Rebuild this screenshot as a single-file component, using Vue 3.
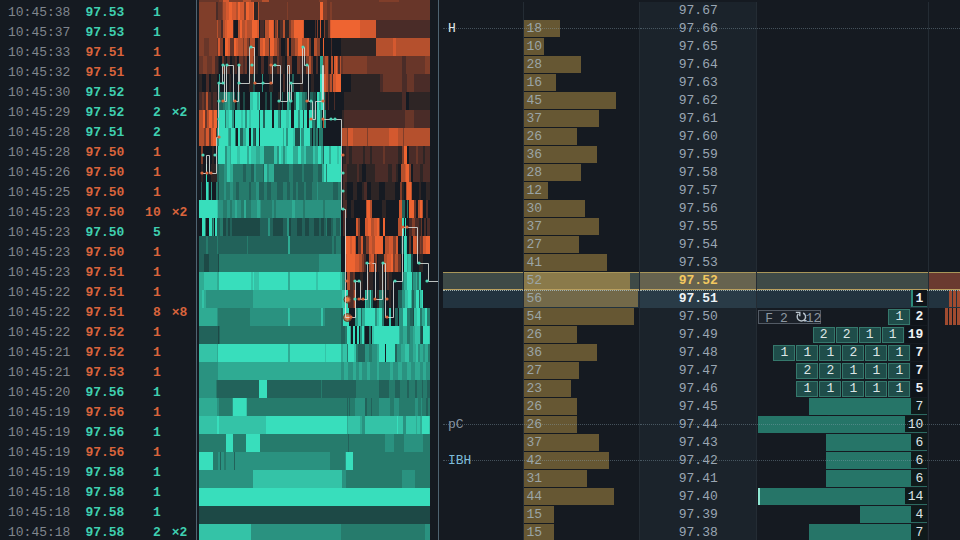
<template>
  <main class="desk">
    <section class="tape" aria-label="Time and sales">
      <table class="tape-table">
        <tbody>
          <tr v-for="(t, i) in trades" :key="i" :class="t.side">
            <td class="time">{{ t.time }}</td>
            <td class="price">{{ t.price }}</td>
            <td class="qty">{{ t.qty }}</td>
            <td class="mult">{{ t.mult }}</td>
          </tr>
        </tbody>
      </table>
    </section>

    <section class="heat" aria-label="Liquidity heatmap">
      <svg class="heat-chart" viewBox="0 0 239 540" preserveAspectRatio="none">
        <g shape-rendering="crispEdges">
          <rect
            v-for="(c, i) in cells"
            :key="i"
            :x="c.x"
            :y="c.y"
            :width="c.w"
            :height="c.h"
            :fill="c.fill"
          />
        </g>
        <g v-for="(d, i) in bigPrints" :key="'b' + i">
          <circle :cx="d[0]" :cy="d[1]" :r="d[2]" fill="#c96a3c" fill-opacity="0.75" stroke="#5d3a2a" />
          <circle :cx="d[0]" :cy="d[1]" r="2" fill="#f07a45" />
        </g>
        <path :d="pricePath" fill="none" stroke="#d9dfdc" stroke-width="1" stroke-opacity="0.85" />
        <circle v-for="(d, i) in buys" :key="'u' + i" :cx="d[0]" :cy="d[1]" r="1.6" fill="#4fd6b8" />
        <circle v-for="(d, i) in sells" :key="'s' + i" :cx="d[0]" :cy="d[1]" r="1.6" fill="#d9663c" />
      </svg>
    </section>

    <section class="ladder" aria-label="Price ladder">
      <table class="ladder-table">
        <colgroup>
          <col class="col-label">
          <col class="col-vol">
          <col class="col-price">
          <col class="col-bid">
          <col class="col-ask">
        </colgroup>
        <tbody>
          <tr v-for="r in levels" :key="r.price" :class="[r.mark, { marked: r.label }]">
            <td class="label" :class="r.label && r.label.toLowerCase()">{{ r.label }}</td>
            <td class="vol">
              <div v-if="r.vol" class="vol-bar" :style="{ width: r.vol * 1.767 + '%' }">{{ r.vol }}</div>
            </td>
            <td class="price">{{ r.price }}</td>
            <td class="bid">
              <div class="bid-line">
                <div v-if="r.tag" class="tag">
                  <span>F</span>
                  <span>2</span>
                  <svg class="reload" viewBox="0 0 12 12">
                    <path d="M8.2 2A4.2 4.2 0 1 1 3.4 2.8" />
                    <path d="M0.8 1.4H4.8V5.2M9 9.8H11.6" />
                  </svg>
                  <span>12</span>
                </div>
                <div v-if="r.bar" class="bid-bar" :class="{ capped: r.bar > 10 }" :style="{ width: Math.min(100, r.bar * 10) + '%' }"></div>
                <span v-for="(o, i) in r.orders" :key="i" class="order">{{ o }}</span>
                <b v-if="r.total" class="total" :class="{ resting: r.bar, best: r.mark === 'last' }">{{ r.total }}</b>
              </div>
            </td>
            <td class="ask">
              <div class="ask-line">
                <i v-for="n in r.asks" :key="n"></i>
              </div>
            </td>
          </tr>
        </tbody>
      </table>
    </section>
  </main>
</template>

<script setup>
const tape = `10:45:38 97.53 1 b
10:45:37 97.53 1 b
10:45:33 97.51 1 s
10:45:32 97.51 1 s
10:45:30 97.52 1 b
10:45:29 97.52 2 b ×2
10:45:28 97.51 2 b
10:45:28 97.50 1 s
10:45:26 97.50 1 s
10:45:25 97.50 1 s
10:45:23 97.50 10 s ×2
10:45:23 97.50 5 b
10:45:23 97.50 1 s
10:45:23 97.51 1 s
10:45:22 97.51 1 s
10:45:22 97.51 8 s ×8
10:45:22 97.52 1 s
10:45:21 97.52 1 s
10:45:21 97.53 1 s
10:45:20 97.56 1 b
10:45:19 97.56 1 s
10:45:19 97.56 1 b
10:45:19 97.56 1 s
10:45:19 97.58 1 b
10:45:18 97.58 1 b
10:45:18 97.58 1 b
10:45:18 97.58 2 b ×2`

const trades = tape.split('\n').map((row) => {
  const [time, price, qty, side, mult] = row.split(' ')
  return { time, price, qty, side: side === 'b' ? 'buy' : 'sell', mult }
})

// heat palette: a-g resting bids, m-s resting offers, z empty
const palette = {
  a: '#1d4946',
  b: '#22625a',
  c: '#267b6c',
  d: '#2a9280',
  e: '#2fab93',
  f: '#34c3a7',
  g: '#38debc',
  m: '#2e2525',
  n: '#4a2c28',
  o: '#683629',
  p: '#803e2a',
  q: '#b5502d',
  r: '#d4592f',
  s: '#ee6431',
  z: '#151a22'
}

// one string per price row, each token is start x + level
const heatRows = [
  '0o 20p 24r 30p 44q 52p 63q 70o 120p 128o 180p 200o',
  '0p 17n 19o 23p 24q 27r 30s 33r 37q 39s 41r 45p 47s 50r 54s 55m 59q 60o 88p 89o 121s 124p 128o 131p 133o',
  '0p 18q 19p 22n 24q 26r 28s 34n 35z 39q 41s 43q 46r 48q 53s 58r 60z 61n 65m 66q 70s 74r 75m 76p 78q 79m 81n 84q 86m 90p 92q 95s 104r 105z 116n 117z 118p 119z 121r 122z 125p 126m 129o 131r 132s 161r 177n',
  '0p 5o 10p 18o 19r 21p 24z 26s 29r 31o 35s 37r 39q 44p 45q 48p 50n 51q 56z 59n 61r 64s 66q 70n 71s 75q 78p 80n 82z 86m 88q 90z 92p 96q 99s 103q 108r 110o 112z 115q 118p 121z 124s 125z 132n 133z 142m 177q 194r 197q',
  '0o 4p 8o 13p 16n 19m 20z 23o 25m 27z 28n 31z 33m 36n 38z 40o 44n 46o 48z 51q 54p 56m 59z 62n 65z 69n 71p 74m 78o 80n 83m 86z 88p 91o 93z 98o 101n 104m 107p 110q 112o 114z 117n 119z 121e 124p 126q 129n 130z 132q 134z 135r 137s 138q 139n 141q 142o 144p 168o 203n 207o 226p',
  '0m 3z 7n 10z 12m 18z 20d 21z 30m 32z 40n 41z 50m 54a 56z 63d 64z 70m 74z 84n 86z 93b 95z 101m 104z 112m 115z 121g 124f 125r 127q 129o 131q 133n 134r 137s 142z 152m 181n 184o 203n 207n 208o 215n',
  '0n 3o 5n 7q 9n 12m 14n 18z 20c 21b 24c 26d 29e 31c 33b 36z 38b 41z 44a 46z 51f 54g 58e 60g 61z 66a 68z 71b 73z 79m 81z 83b 84z 88e 90c 92z 95b 97g 100e 103c 106b 108z 111b 114a 117z 118g 120e 122g 124c 126n 127z 129n 130z 135n 136z 145m 203n 207z 210m',
  '0q 4s 6o 8q 10s 13q 15s 18a 20g 26c 27f 30g 33d 35z 36g 42f 44g 46d 48g 50f 52g 60a 61g 64b 66g 73z 75g 79d 81b 82g 87f 90g 92z 95g 99d 101g 104a 105g 108z 110g 113c 116a 118g 121d 123z 124q 125d 127z 143m 145n 206o 215n',
  '0q 5p 7r 10o 12r 14s 17n 18d 20g 29e 30d 32g 36c 37z 39g 41b 44e 47g 50z 52g 54b 56a 57g 60z 61g 84e 85g 87d 89g 94f 96a 101g 102d 105g 111b 113z 114c 116a 117c 119z 120c 124z 143q 148p 149r 154q 168p 169q 190r 199q 204p 205q',
  '0z 2p 4z 13m 15z 18a 19g 26d 28f 31e 32g 38f 41g 48e 50g 52f 57e 61f 65c 75f 78d 80g 82f 84d 86f 88g 94e 99g 102e 105f 107d 114f 116e 119g 122e 124b 125g 130e 132g 138f 140g 142z 144m 147n 150m 153n 164m 166n 171m 173n 184o 186n 199m 203p 205s 208z 210n 217o 219n 224m 226n',
  '0z 2m 4z 7g 8z 12m 18b 20c 25d 28f 31e 34c 44b 47c 52b 55d 57c 64b 65f 68d 70e 75b 90c 94b 103c 105b 114c 119b 123e 125g 127c 128g 142z 144n 148m 158n 160m 163z 167m 176n 189m 193n 197m 199z 202q 206r 207s 210p 212z 214n 221m 224n',
  '0z 2b 3z 7g 9d 10z 12d 13z 17c 19a 20c 25d 27c 31d 34c 37b 40c 50b 52c 57d 60b 65c 68b 72c 78b 84c 88b 91c 94b 97c 99b 105c 107b 113c 118d 119c 134b 139c 142z 144n 146m 148z 154m 158z 163m 165n 168z 172m 180z 186m 196z 201p 203m 205z 207q 208s 212q 213z 220m 222z 227m',
  '0g 18f 19d 24c 28d 31c 33d 36e 38d 42c 45e 47c 52d 58e 61d 62c 73d 75c 77d 93e 96d 104c 106d 116d 124c 126d 142z 144n 148z 152m 155z 167q 168s 171q 173z 183m 187z 200r 203b 206z 208c 209z 210s 215o 217z 219q 221s 223q 224z 227n 229z',
  '0z 3g 6c 7z 10g 13b 14d 15z 16g 18b 21c 24a 27b 29a 31b 33a 61b 69d 71b 74a 84b 88d 90a 92b 98a 103b 106a 110b 115a 120b 122a 125b 127c 128a 132b 134c 137b 141d 142z 144n 146z 157r 159p 161z 166r 169s 172q 175r 178s 180p 181z 184s 186z 199q 203g 205z 206g 207z 210n 213p 216n 220m 222o 223z 225n 227z 228n',
  '0b 7c 9b 18c 19b 48c 49b 89e 91b 116b 133c 135b 137c 142z 146s 151r 153s 156q 157z 159o 162r 164m 167p 170r 173q 176s 184z 186q 190r 194p 197r 199z 202a 205g 207f 208z 210o 212z 214r 217q 219n 221p 222o 224r 227s',
  '0b 5a 10b 19a 20c 120d 142z 146r 148s 156r 160q 163p 165n 167z 170q 172r 175n 176p 178z 179m 185q 188r 192s 194p 196q 199o 202z 205g 208e 209f 212a 214z 220m 224z',
  '0e 5f 18e 20g 52f 54g 55f 60g 89e 91g 117f 119g 141f 143d 145c 146z 148q 151n 154o 156z 161m 164z 168n 170m 174z 180m 185z 188n 190m 193z 203c 205e 208g 213b 214d 217e 218c 220f 222z',
  '0e 3f 5e 7d 54e 143f 146g 149n 154o 155q 157z 166f 167d 170c 171g 172b 174z 178m 180c 183b 185z 190m 192z 199b 203d 206f 209g 212e 213b 215d 217g 220b 221f 223g 224z',
  '0e 18d 19c 51d 89f 91d 122f 124d 126c 142b 144g 150z 156d 159f 162b 163e 166g 176d 178f 180g 183c 185z 190f 192z 196b 199z 200d 204g 208c 211b 214a 215f 218g 221c 223e 226g 228c',
  '0b 19a 20b 21c 142b 146c 148g 151e 152z 154g 156z 158g 160z 161d 163g 165b 166z 170c 172z 173f 175g 200e 201d 204e 208c 211d 214e 216f 221b 222a 224g 230f',
  '0f 18e 19g 89e 91g 126f 127g 142e 144f 148c 149g 155f 157c 159b 166d 170c 173d 178e 180g 184g 186z 187g 196b 198d 202e 206f 210d 214e 217f 219d 221e 224d 226e 229c',
  '0d 19e 142d 145e 149d 154e 157d 160e 163d 168e 171d 178e 180d 191e 194d 199e 203d 208e 212d 216e 221d 224e 227d',
  '0d 17c 18b 60g 68b 122c 123b 157c 180b 190c 196b 201c 208b 210c 216b 218c 223b 224c 228b',
  '0e 18d 20c 33d 34g 47f 48c 148b 149c 150b 151c 156d 166b 168c 172b 173c 180d 191c 195d 200c 216d 219c 222d 223c 227b 229c',
  '0f 18g 20f 67g 148e 149f 161e 163d 166f 198g 199f 204d 207f 217e 218f 221e 223g 230f',
  '0c 27g 34c 47g 61c 149b 150c 186d 195c 205d 224c',
  '0g 14c 19d 21b 22d 25c 27d 35b 36d 131c 146d 147g 154c',
  '0d 54f 143d 147c 203d 216c',
  '0g',
  '0a',
  '0f 52d 142c 226d'
]

const chartWidth = 231

const cells = heatRows.flatMap((row, i) => {
  const y = i === 0 ? 0 : 18 * i - 16
  const h = i === 0 ? 2 : 18
  const runs = row.split(' ').map((t) => [parseInt(t), t.slice(-1)])
  return runs.map(([x, level], n) => ({
    x,
    y,
    w: (n + 1 < runs.length ? runs[n + 1][0] : chartWidth) - x,
    h,
    fill: palette[level]
  }))
})

const pricePath =
  'M2 173.5H7.5V155.5H10.5V173.5H17.5V137.5H19.5V83.5H23.5V65.5H25.5V101.5H27.5V65.5H34.5V101.5H39.5V65.5H40.5V83.5' +
  'H50.5V47.5H55.5V83.5H73.5V65.5H81.5V101.5H88.5V65.5H90.5V101.5H92.5V83.5H103.5V47.5H105.5V65.5H109.5V101.5' +
  'H113.5V119.5H116.5V101.5H123.5V65.5H124.5V119.5H142.5V209.5H146.5V317.5H156.5V281.5H161.5V299.5H168.5V263.5' +
  'H176.5V299.5H183.5V263.5H186.5V317.5H194.5V281.5H203.5V227.5H218.5V263.5H229.5V281.5H239'

const bigPrints = [[148.5, 299.5, 3.5], [148.5, 317.5, 4]]

const buys = [
  [4, 155], [16, 155], [20, 83], [24, 83], [24, 65], [28, 65], [20, 101], [20, 119], [40, 65], [40, 83],
  [52, 47], [53, 65], [64, 83], [76, 65], [80, 101], [92, 101], [92, 83], [104, 47], [108, 65], [112, 101],
  [132, 119], [136, 119], [144, 173], [144, 191], [144, 209], [156, 281], [160, 281], [168, 263], [184, 263],
  [156, 299], [196, 281], [220, 263], [228, 281]
]

const sells = [
  [3, 173], [8, 173], [12, 173], [20, 137], [24, 101], [36, 101], [56, 83], [72, 65], [72, 83], [108, 101],
  [124, 101], [112, 119], [124, 119], [144, 155], [148, 281], [160, 299], [164, 299], [172, 263], [176, 299],
  [188, 299], [188, 317], [152, 317], [204, 227], [208, 227]
]

const volumes = [
  0, 18, 10, 28, 16, 45, 37, 26, 36, 28, 12, 30, 37, 27, 41, 52, 56, 54, 26, 36, 27, 23, 26, 26, 37, 42, 31, 44, 15, 15
]

const extras = {
  '97.66': { label: 'H' },
  '97.52': { mark: 'cursor' },
  '97.51': { mark: 'last', total: 1, asks: 3 },
  '97.50': { tag: true, orders: [1], total: 2, asks: 4 },
  '97.49': { orders: [2, 2, 1, 1], total: 19 },
  '97.48': { orders: [1, 1, 1, 2, 1, 1], total: 7 },
  '97.47': { orders: [2, 2, 1, 1, 1], total: 7 },
  '97.46': { orders: [1, 1, 1, 1, 1], total: 5 },
  '97.45': { bar: 7, total: 7 },
  '97.44': { label: 'pC', bar: 10, total: 10 },
  '97.43': { bar: 6, total: 6 },
  '97.42': { label: 'IBH', bar: 6, total: 6 },
  '97.41': { bar: 6, total: 6 },
  '97.40': { bar: 14, total: 14 },
  '97.39': { bar: 4, total: 4 },
  '97.38': { bar: 7, total: 7 }
}

const levels = volumes.map((vol, i) => {
  const price = ((9767 - i) / 100).toFixed(2)
  return { price, vol, ...extras[price] }
})
</script>

<style>
body {
  background: #151a21;
}
</style>

<style scoped>
.desk {
  display: grid;
  grid-template-columns: 197fr 242fr 521fr;
  height: 100vh;
  overflow: hidden;
  background: #151a21;
  color: #9aa5b1;
  font-family: 'Liberation Mono', monospace;
  font-size: 13px;
}

table {
  width: 100%;
  border-collapse: collapse;
  table-layout: fixed;
}

td {
  padding: 0;
}

/* time and sales */
.tape {
  padding-top: 3px;
  border-right: 1px solid #4f6371;
}

.tape-table tr {
  height: 20px;
  line-height: 20px;
}

.tape-table td {
  white-space: nowrap;
}

.tape-table .time {
  width: 40%;
  padding-left: 8px;
  box-sizing: border-box;
}

.tape-table .price {
  width: 24%;
  padding-left: 7px;
  box-sizing: border-box;
}

.tape-table .qty {
  width: 18%;
  text-align: right;
}

.tape-table .mult {
  padding-left: 11px;
}

.buy td {
  color: #3fd0b1;
  font-weight: bold;
}

.sell td {
  color: #d9643c;
  font-weight: bold;
}

.tape-table tr .time {
  color: #80868e;
  font-weight: normal;
}

/* heatmap */
.heat {
  padding-left: 2px;
  border-right: 1px solid #4f6371;
}

.heat-chart {
  display: block;
  width: 100%;
  height: 540px;
}

/* ladder */
.ladder {
  padding: 2px 0 0 4px;
  background: #151a21;
}

.col-label {
  width: 80px;
}

.col-vol {
  width: 22.6%;
}

.col-price {
  width: 22.6%;
}

.col-bid {
  width: 33.3%;
}

.ladder-table tr {
  height: 18px;
  line-height: 17px;
}

.ladder-table td {
  position: relative;
  height: 18px;
  vertical-align: top;
  white-space: nowrap;
  border-right: 1px solid #242c34;
}

.ladder-table td.ask {
  border-right: 0;
}

.ladder-table .label {
  padding-left: 5px;
  box-sizing: border-box;
  color: #8794a2;
}

.ladder-table .h {
  color: #e4e8eb;
}

.ladder-table .ibh {
  color: #7cbbd9;
}

.vol-bar {
  height: 17px;
  padding-left: 3px;
  box-sizing: border-box;
  background: #665733;
  color: #9ba5a6;
}

.ladder-table .price {
  background: #1b232b;
  text-align: center;
  color: #9aa6b3;
}

.marked td::after {
  content: '';
  position: absolute;
  top: 8px;
  left: 0;
  right: 0;
  border-top: 1px dotted rgba(140, 165, 180, 0.4);
}

.bid-line {
  position: relative;
  display: flex;
  justify-content: flex-end;
  align-items: flex-start;
  gap: 1px;
  height: 17px;
  margin: 0 1px;
}

.bid-bar {
  height: 17px;
  box-sizing: border-box;
  background: #267568;
}

.bid-bar.capped {
  border-left: 2px solid #8fe6d2;
}

.order {
  width: 22px;
  height: 16px;
  margin-top: 1px;
  box-sizing: border-box;
  border: 1px solid #35786c;
  background: #1f4d4a;
  color: #dce6e6;
  line-height: 14px;
  text-align: center;
}

.total {
  min-width: 16px;
  padding: 0 4px 0 3px;
  box-sizing: border-box;
  background: #0f141a;
  color: #eef2f4;
  text-align: right;
}

.total.resting {
  position: absolute;
  top: 0;
  right: 0;
  height: 17px;
  background: #0f1a1b;
  border-bottom: 1px solid #2c6a60;
  color: #dde4e6;
  font-weight: normal;
}

.total.best {
  height: 17px;
  border-left: 2px solid #2b8a7a;
  border-bottom: 1px solid #2c6a60;
}

.tag {
  display: flex;
  gap: 7px;
  width: 63px;
  height: 14px;
  margin: 2px auto 0 0;
  padding-left: 6px;
  box-sizing: border-box;
  border: 1px solid #535b65;
  background: #1b2129;
  color: #8c96a1;
  line-height: 15px;
}

.reload {
  flex: none;
  width: 12px;
  height: 12px;
  margin-right: -8px;
  fill: none;
  stroke: #b9c4cd;
  stroke-width: 1.4;
}

.ask-line {
  display: flex;
  justify-content: flex-end;
  gap: 1px;
  height: 17px;
}

.ask-line i {
  width: 3px;
  background: #a04b30;
}

/* hovered price */
.cursor td {
  background: #3e4a47;
  box-shadow: inset 0 1px #a8965a, inset 0 -1px #b99f5e;
}

.cursor .vol-bar {
  height: 16px;
  margin-top: 1px;
  line-height: 15px;
  background: #8a7a4a;
}

.ladder-table .cursor .price {
  background: #66634f;
  color: #f2c860;
  font-weight: bold;
}

.cursor td.ask {
  background: #6a3a30;
}

/* last traded price */
.last td {
  background: #22333f;
}

.last .vol-bar {
  background: #736949;
}

.ladder-table .last .price {
  background: #293b47;
  color: #eef3f6;
  font-weight: bold;
}

.last td::before {
  content: '';
  position: absolute;
  top: 0;
  left: 0;
  right: 0;
  border-top: 1px dotted #9fb0b0;
}
</style>
